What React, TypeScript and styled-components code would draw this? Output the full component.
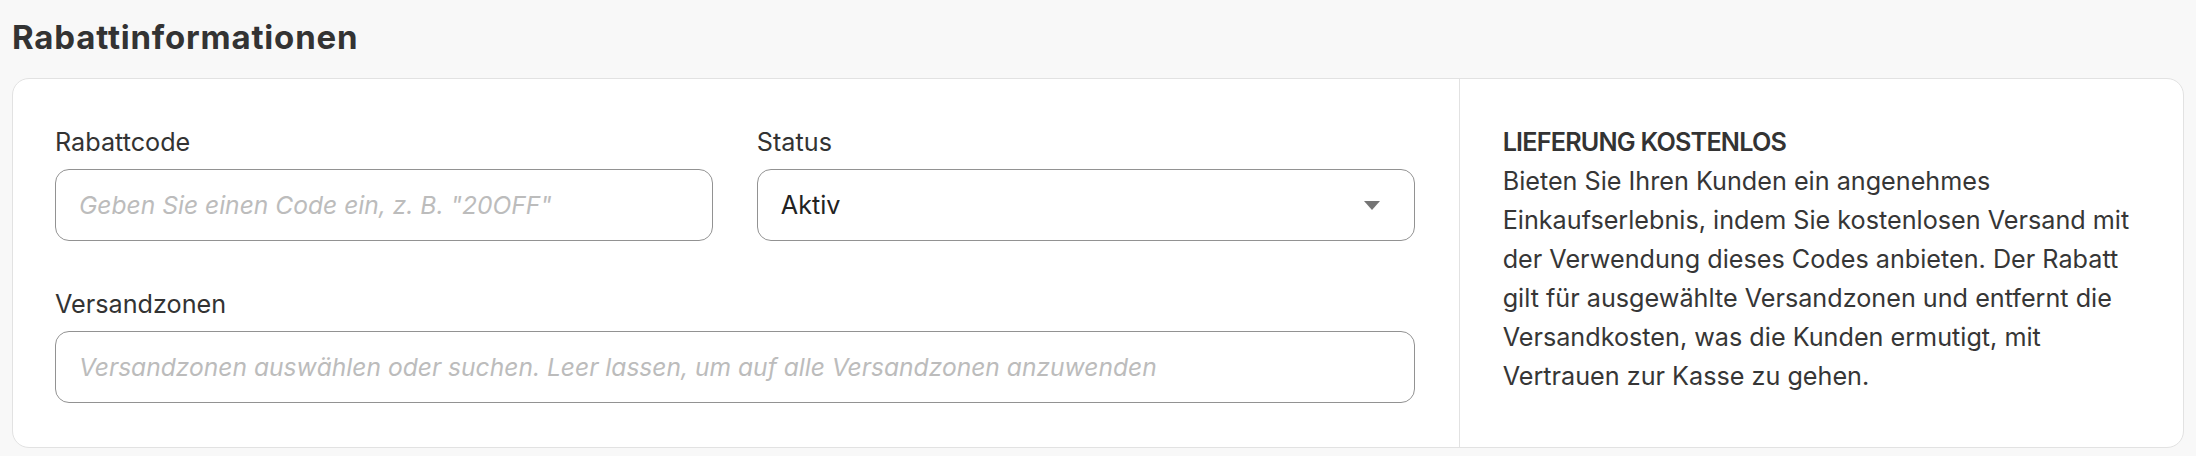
import React from "react";
import styled, { createGlobalStyle } from "styled-components";

const GlobalStyle = createGlobalStyle`
  html, body {
    margin: 0;
    padding: 0;
    background: #f8f8f8;
  }
  body {
    font-family: Inter, "Noto Sans", "Liberation Sans", sans-serif;
    color: #333;
  }
  * { box-sizing: border-box; }
`;

const Page = styled.main`
  padding: 17px 12px 10px;
`;

const Title = styled.h1`
  margin: 0 0 21px;
  font-size: 33px;
  font-weight: 700;
  line-height: 40px;
  color: #333;
  letter-spacing: 0.8px;
`;

const Card = styled.section`
  display: grid;
  grid-template-columns: 2fr 1fr;
  background: #fff;
  border: 1px solid #e2e2e2;
  border-radius: 17px;
  overflow: hidden;
`;

const FormPane = styled.div`
  display: grid;
  grid-template-columns: 1fr 1fr;
  column-gap: 44px;
  row-gap: 44px;
  padding: 44px 44px 44px 42px;
  border-right: 1px solid #e2e2e2;
`;

const Field = styled.div<{ $span?: boolean }>`
  display: flex;
  flex-direction: column;
  gap: 8px;
  grid-column: ${(p) => (p.$span ? "1 / -1" : "auto")};
`;

const Label = styled.label`
  font-size: 25.2px;
  line-height: 38px;
  color: #333;
`;

const TextInput = styled.input`
  width: 100%;
  height: 72px;
  padding: 0 23px;
  border: 1px solid #929292;
  border-radius: 14px;
  background: #fff;
  font-family: inherit;
  font-size: 24.6px;
  color: #222;
  outline: none;

  &::placeholder {
    color: #bcbcbc;
    font-style: italic;
  }
`;

const SelectBox = styled.button`
  display: flex;
  align-items: center;
  justify-content: space-between;
  width: 100%;
  height: 72px;
  padding: 0 34px 0 23px;
  border: 1px solid #929292;
  border-radius: 14px;
  background: #fff;
  font-family: inherit;
  font-size: 25.2px;
  color: #222;
  text-align: left;
  cursor: pointer;
`;

const InfoPane = styled.div`
  padding: 44px 43px 43px 43px;
`;

const InfoText = styled.p`
  margin: 0;
  font-size: 25.2px;
  line-height: 39px;
  color: #363636;
`;

const InfoHeading = styled.strong`
  display: block;
  font-weight: 600;
  letter-spacing: -0.8px;
  color: #333;
`;

const CaretIcon = () => (
  <svg width="16" height="9" viewBox="0 0 16 9" aria-hidden="true">
    <polygon points="0,0 16,0 8,9" fill="#757575" />
  </svg>
);

export default function App() {
  return (
    <>
      <GlobalStyle />
      <Page>
        <Title>Rabattinformationen</Title>
        <Card>
          <FormPane>
            <Field>
              <Label htmlFor="code">Rabattcode</Label>
              <TextInput id="code" placeholder={'Geben Sie einen Code ein, z. B. "20OFF"'} />
            </Field>
            <Field>
              <Label>Status</Label>
              <SelectBox type="button">
                <span>Aktiv</span>
                <CaretIcon />
              </SelectBox>
            </Field>
            <Field $span>
              <Label htmlFor="zones">Versandzonen</Label>
              <TextInput
                id="zones"
                placeholder="Versandzonen auswählen oder suchen. Leer lassen, um auf alle Versandzonen anzuwenden"
              />
            </Field>
          </FormPane>
          <InfoPane>
            <InfoText>
              <InfoHeading>LIEFERUNG KOSTENLOS</InfoHeading>
              Bieten Sie Ihren Kunden ein angenehmes Einkaufserlebnis, indem Sie kostenlosen
              Versand mit der Verwendung dieses Codes anbieten. Der Rabatt gilt für ausgewählte
              Versandzonen und entfernt die Versandkosten, was die Kunden ermutigt, mit Vertrauen
              zur Kasse zu gehen.
            </InfoText>
          </InfoPane>
        </Card>
      </Page>
    </>
  );
}
